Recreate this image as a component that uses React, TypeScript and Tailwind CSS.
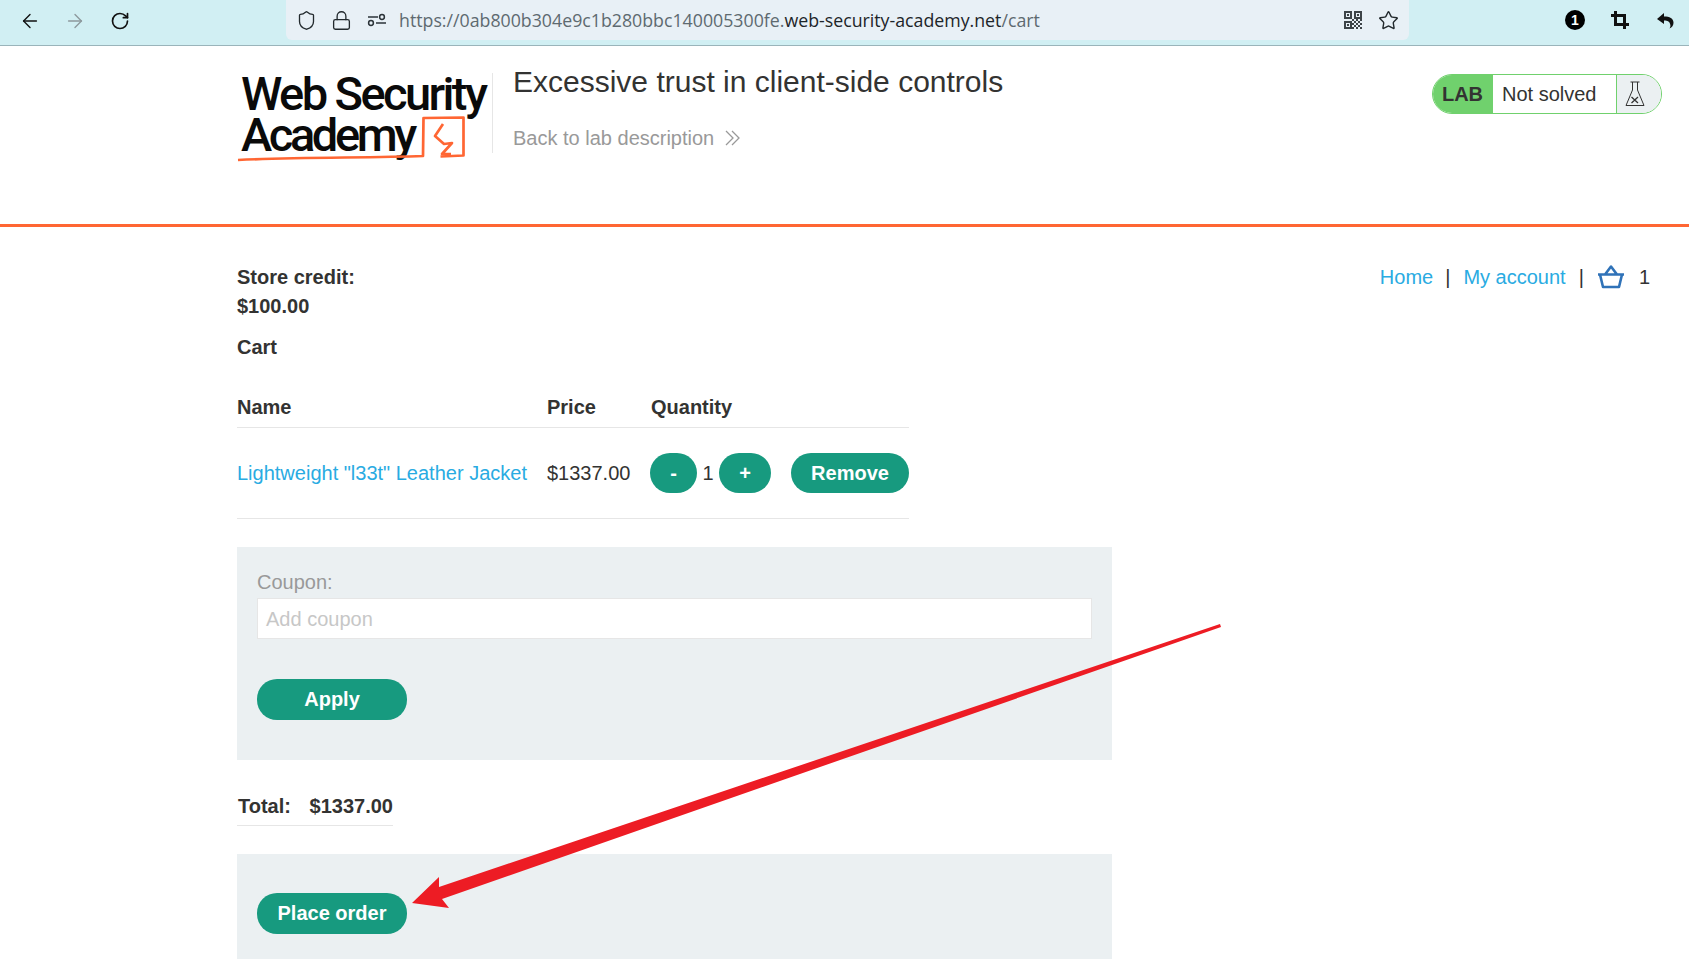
import { ArrowLeft, ArrowRight, Lock, RotateCw, Shield, Star } from "lucide-react";

const sans = "font-['Liberation_Sans',Arial,sans-serif]";
const pill = "inline-flex items-center justify-center rounded-[20px] bg-[#179a7f] font-bold text-white text-[20px]";

function TuneIcon() {
  return (
    <svg width="20" height="20" viewBox="0 0 20 20" fill="none" stroke="#2b3338" strokeWidth="1.5">
      <path d="M1 7h10" />
      <circle cx="15" cy="7" r="2.4" />
      <circle cx="4" cy="13" r="2.4" />
      <path d="M9 13h10" />
    </svg>
  );
}

function QrIcon() {
  return (
    <svg width="18" height="18" viewBox="0 0 18 18" fill="#3d4448">
      <path d="M0 0h8v8H0zM2 2v4h4V2zM10 0h8v8h-8zM12 2v4h4V2zM0 10h8v8H0zM2 12v4h4v-4z" fillRule="evenodd" />
      <path d="M3 3h2v2H3zM13 3h2v2h-2zM3 13h2v2H3zM8 8h2v2H8zM10 10h2v2h-2zM12 8h2v2h-2zM16 8h2v2h-2zM14 10h2v2h-2zM8 12h2v2H8zM12 12h2v2h-2zM16 12h2v2h-2zM10 14h2v2h-2zM14 14h2v2h-2zM8 16h2v2H8zM12 16h2v2h-2zM16 16h2v2h-2z" />
    </svg>
  );
}

function CropIcon() {
  return (
    <svg width="18" height="18" viewBox="0 0 18 18" fill="none" stroke="#111" strokeWidth="3">
      <path d="M4.5 0v13.5H18M0 4.5h13.5V18" />
    </svg>
  );
}

function UndoIcon() {
  return (
    <svg width="18" height="18" viewBox="0 0 18 18" fill="#111">
      <path d="M8 2 1 8l7 5V9.500c3.600 0 6 .9 6.400 4.800.1 1.200-.3 2.400-.9 3.200 2.600-1 4-3.300 4-5.800C17.500 7.500 13.600 5.600 8 5.600z" />
    </svg>
  );
}

function FlaskIcon() {
  return (
    <svg width="20" height="26" viewBox="0 0 20 26" fill="none" stroke="#333" strokeWidth="1">
      <path d="M5.500 1h9M7.500 1v8L1 24.500h18L12.500 9V1" />
      <path d="M6.500 22l6.500-6M6.500 16l6.500 6" strokeWidth="1.300" />
    </svg>
  );
}

function BasketIcon() {
  return (
    <svg width="28" height="24" viewBox="0 0 28 24" fill="none" stroke="#2f72b8" strokeWidth="2.600" strokeLinejoin="round">
      <path d="M1 9.500h26M3 9.500l3 12.500h16l3-12.500M8 9.500 14 1.500l6 8" />
    </svg>
  );
}

function BrowserBar() {
  return (
    <div className="flex h-[46px] items-start border-b border-[#9ab4ba] bg-[#d1eff3]">
      <div className="flex h-[45px] w-[286px] items-center pl-[19px] pb-[4px]">
        <ArrowLeft size={22} strokeWidth={1.500} className="text-[#111]" />
        <ArrowRight size={22} strokeWidth={1.500} className="ml-[23px] text-[#8d999d]" />
        <RotateCw size={20} strokeWidth={2} className="ml-[24px] text-[#111]" />
      </div>
      <div className="flex h-[40px] w-[1123px] items-center rounded-b-[6px] bg-[#e8f0f6] pl-[10px] pr-[10px]">
        <Shield size={21} strokeWidth={1.500} className="text-[#22292d]" />
        <Lock size={21} strokeWidth={1.500} className="ml-[14px] text-[#22292d]" />
        <span className="ml-[15px]"><TuneIcon /></span>
        <span className="ml-[12px] whitespace-nowrap font-['Open_Sans',sans-serif] text-[17.75px] text-[#5e6a70]">
          https://0ab800b304e9c1b280bbc140005300fe.<span className="text-[#1d2529]">web-security-academy.net</span>/cart
        </span>
        <span className="ml-auto"><QrIcon /></span>
        <Star size={21} strokeWidth={1.600} className="ml-[16px] text-[#22292d]" />
      </div>
      <div className="flex h-[40px] flex-1 items-center pl-[156px]">
        <span className="flex h-[20px] w-[20px] items-center justify-center rounded-full bg-black font-['Liberation_Sans',sans-serif] text-[14px] font-bold text-white">1</span>
        <span className="ml-[26px]"><CropIcon /></span>
        <span className="ml-[27px]"><UndoIcon /></span>
      </div>
    </div>
  );
}

function Logo() {
  return (
    <div className="relative mt-[27px] h-[95px] w-[255px] pl-[4px] font-['Roboto',sans-serif] text-[47px] font-medium leading-[41px] text-[#0a0a0a]">
      <div className="whitespace-nowrap tracking-[-2.600px]">Web Security</div>
      <div className="whitespace-nowrap tracking-[-3.400px]">Academy</div>
      <svg className="absolute left-0 top-0" width="255" height="95" viewBox="0 0 255 95" fill="none" stroke="#ff6633" strokeWidth="2.700" strokeLinejoin="round">
        <path d="M1 87c60-3 130-2 185-4l.5-38 40-.5 0 38-23 1" />
        <path d="M206 51l-8 12 9 8 8-1-10 11 9 0" />
      </svg>
    </div>
  );
}

function LabStatus() {
  return (
    <div className={`mt-[28px] flex h-[40px] w-[230px] overflow-hidden rounded-[20px] border border-[#70d16d] ${sans}`}>
      <div className="flex w-[60px] items-center justify-center bg-[#70d16d] pr-px text-[20px] font-bold text-[#333332]">LAB</div>
      <div className="flex w-[123px] items-center pl-[9px] text-[20px] text-[#333332]">Not solved</div>
      <div className="flex flex-1 items-center justify-center border-l border-[#70d16d] bg-[#ebf0f2] pr-[9px]"><FlaskIcon /></div>
    </div>
  );
}

function Header() {
  return (
    <header className="flex h-[181px] border-b-[3px] border-[#ff6633] pl-[237px] pr-[27px]">
      <Logo />
      <div className="mt-[27px] h-[80px] w-px bg-[#e6e6e6]" />
      <div className="ml-[20px] flex-1 pt-[14px]">
        <h2 className={`${sans} text-[30px] leading-[44px] text-[#333332]`}>Excessive trust in client-side controls</h2>
        <div className={`mt-[22px] flex items-center ${sans} text-[20px] leading-[24px] text-[#999]`}>
          Back to lab description
          <svg className="ml-[11px]" width="15" height="16" viewBox="0 0 15 16" fill="none" stroke="#999" strokeWidth="1.300">
            <path d="M1 1l7 7-7 7M7 1l7 7-7 7" />
          </svg>
        </div>
      </div>
      <LabStatus />
    </header>
  );
}

function CartTable() {
  return (
    <table className="w-[672px] border-collapse text-left">
      <thead>
        <tr className="h-[65px] border-b border-[#e6e6e6] align-bottom">
          <th className="w-[310px] pb-[5px] font-bold leading-[29px]">Name</th>
          <th className="w-[103px] pb-[5px] font-bold leading-[29px]">Price</th>
          <th className="pb-[5px] pl-px font-bold leading-[29px]">Quantity</th>
        </tr>
      </thead>
      <tbody>
        <tr className="h-[91px] border-b border-[#e6e6e6]">
          <td className="text-[#29abe2]">Lightweight "l33t" Leather Jacket</td>
          <td>$1337.00</td>
          <td>
            <div className="flex items-center">
              <span className={`${pill} h-[40px] w-[47px]`}>-</span>
              <span className="w-[22px] text-center">1</span>
              <span className={`${pill} h-[40px] w-[52px]`}>+</span>
              <span className={`${pill} ml-[20px] h-[40px] w-[118px]`}>Remove</span>
            </div>
          </td>
        </tr>
      </tbody>
    </table>
  );
}

function TopNav() {
  return (
    <nav className="flex h-[29px] items-center pb-[2px] pr-[39px] text-[20px]">
      <span className="text-[#29abe2]">Home</span>
      <span className="ml-[12px] mr-[13px]">|</span>
      <span className="text-[#29abe2]">My account</span>
      <span className="mx-[13px]">|</span>
      <BasketIcon />
      <span className="ml-[14px]">1</span>
    </nav>
  );
}

function Arrow() {
  return (
    <svg className="absolute left-0 top-0" width="1689" height="959" viewBox="0 0 1689 959" fill="#ed1c24">
      <path d="M1220 624 439 887V877L412 903 449 908 442 899 1221 627z" />
    </svg>
  );
}

export default function App() {
  return (
    <div className={`relative h-[959px] w-[1689px] overflow-hidden bg-white ${sans} text-[20px] text-[#333332]`}>
      <BrowserBar />
      <Header />
      <main className="pl-[237px] pt-[36px]">
        <div className="flex items-start justify-between">
          <div className="font-bold leading-[29px]">
            <div>Store credit:</div>
            <div>$100.00</div>
          </div>
          <TopNav />
        </div>
        <div className="mt-[12px] font-bold leading-[29px]">Cart</div>
        <CartTable />
        <section className="mt-[28px] h-[213px] w-[875px] bg-[#ebf0f2] px-[20px] pt-[21px]">
          <div className="leading-[29px] text-[#999]">Coupon:</div>
          <div className="mt-px flex h-[41px] w-[835px] items-center border border-[#e6e6e6] bg-white pl-[8px] pt-[1px] text-[#c7c7c7]">Add coupon</div>
          <span className={`${pill} mt-[40px] h-[41px] w-[150px]`}>Apply</span>
        </section>
        <div className="mt-[32px] flex h-[34px] w-[156px] justify-between border-b border-[#e6e6e6] pl-px font-bold leading-[29px]">
          <span>Total:</span>
          <span>$1337.00</span>
        </div>
        <section className="mt-[28px] h-[120px] w-[875px] bg-[#ebf0f2] px-[20px] pt-[39px]">
          <span className={`${pill} h-[41px] w-[150px]`}>Place order</span>
        </section>
      </main>
      <Arrow />
    </div>
  );
}
